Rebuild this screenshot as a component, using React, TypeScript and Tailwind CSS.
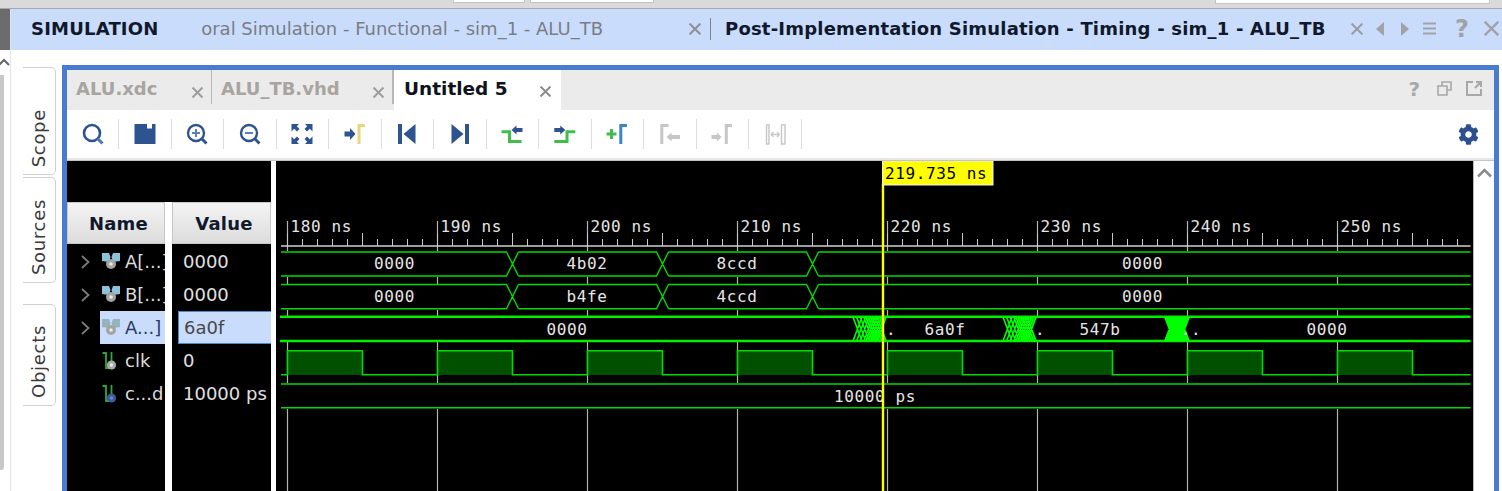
import { FaCog } from 'react-icons/fa';

const NAVY = '#2d5490';
const GREEN = '#3fbf4a';
const OFF = '#c6c6c6';
const WAVE = '#00dc00';

function CloseX({ size = 11, color = '#9c9c9c', width = 2 }: { size?: number; color?: string; width?: number }) {
  return (
    <svg width={size} height={size} viewBox="0 0 10 10" className="shrink-0">
      <path d="M0.5 0.5 L9.5 9.5 M9.5 0.5 L0.5 9.5" stroke={color} strokeWidth={width * 10 / size} fill="none" />
    </svg>
  );
}

const TOOL_ICONS = [
  <>
    <circle cx="11" cy="11" r="8" fill="none" stroke={NAVY} strokeWidth="2.6" />
    <path d="M16.5 16.5 L21.5 21.5" stroke="#4a78b8" strokeWidth="3" />
  </>,
  <path d="M1.5 2 H14 V6.5 H19 V2 H22.5 V22 H1.5 Z" fill={NAVY} />,
  <>
    <circle cx="11" cy="11" r="8" fill="none" stroke={NAVY} strokeWidth="2.4" />
    <path d="M7 11 H15 M11 7 V15" stroke="#5a82b8" strokeWidth="2" />
    <path d="M16.5 16.5 L21.5 21.5" stroke={NAVY} strokeWidth="3" />
  </>,
  <>
    <circle cx="11" cy="11" r="8" fill="none" stroke={NAVY} strokeWidth="2.4" />
    <path d="M7 11 H15" stroke="#5a82b8" strokeWidth="2" />
    <path d="M16.5 16.5 L21.5 21.5" stroke={NAVY} strokeWidth="3" />
  </>,
  <g fill={NAVY}>
    <path d="M1.5 2 H9 L6.8 4.2 L9.5 7 L7 9.5 L4.2 6.8 L1.5 9.5 Z" />
    <path d="M22.5 2 H15 L17.2 4.2 L14.5 7 L17 9.5 L19.8 6.8 L22.5 9.5 Z" />
    <path d="M1.5 22 H9 L6.8 19.8 L9.5 17 L7 14.5 L4.2 17.2 L1.5 14.5 Z" />
    <path d="M22.5 22 H15 L17.2 19.8 L14.5 17 L17 14.5 L19.8 17.2 L22.5 14.5 Z" />
  </g>,
  <>
    <path d="M1.5 9.5 H7 V6 L12.5 12 L7 18 V14.5 H1.5 Z" fill={NAVY} />
    <path d="M16 22 V3.5 H22" fill="none" stroke="#e8d57c" strokeWidth="3" />
  </>,
  <>
    <path d="M3 2 H7 V22 H3 Z" fill={NAVY} />
    <path d="M8.5 12 L20.5 2 V22 Z" fill={NAVY} />
  </>,
  <>
    <path d="M3.5 2 L15.5 12 L3.5 22 Z" fill={NAVY} />
    <path d="M17 2 H21 V22 H17 Z" fill={NAVY} />
  </>,
  <>
    <path d="M1.5 9.7 H9.5 V19.5 H21.5" fill="none" stroke={GREEN} strokeWidth="3" />
    <path d="M11.5 8 L16.5 3.5 V6 H22.5 V10 H16.5 V12.5 Z" fill={NAVY} />
  </>,
  <>
    <path d="M1.3 19.5 H14 V9.7 H22.3" fill="none" stroke={GREEN} strokeWidth="3" />
    <path d="M12.3 8 L7.3 3.5 V6 H1.3 V10 H7.3 V12.5 Z" fill={NAVY} />
  </>,
  <>
    <path d="M1.5 12 H11.5 M6.5 7 V17" stroke={GREEN} strokeWidth="3" />
    <path d="M15.8 22 V3.5 H22" fill="none" stroke="#3a86c2" strokeWidth="3" />
  </>,
  <>
    <path d="M3.8 22 V3.5 H10.5" fill="none" stroke={OFF} strokeWidth="3" />
    <path d="M8.5 15 L13.5 10.5 V13 H22 V17 H13.5 V19.5 Z" fill={OFF} />
  </>,
  <>
    <path d="M1.5 13 H7 V10.5 L11.5 15 L7 19.5 V17 H1.5 Z" fill={OFF} />
    <path d="M16.3 22 V3.5 H22" fill="none" stroke={OFF} strokeWidth="3" />
  </>,
  <>
    <path d="M3.5 3 H6 V22 H3.5 Z M18.5 3 H22 V22 H18.5 Z" fill="none" stroke={OFF} strokeWidth="1.4" />
    <path d="M8 12.5 H16.5 M8 12.5 L10.5 10 M8 12.5 L10.5 15 M16.5 12.5 L14 10 M16.5 12.5 L14 15" fill="none" stroke={OFF} strokeWidth="1.4" />
  </>,
];

function BusIcon({ dim }: { dim?: boolean }) {
  return (
    <svg width="20" height="20" viewBox="0 0 20 20" className="shrink-0">
      <path d="M1 1 H8 L9.5 5 L8 10 L1 9 Z M19 1 H12 L10.5 5 L12 10 L19 9 Z" fill={dim ? '#94b4c2' : '#8fc2da'} />
      <circle cx="10" cy="12" r="5" fill="#a4a4a4" />
      <circle cx="10" cy="12" r="1.8" fill="#e8e8e8" />
    </svg>
  );
}

function BitIcon({ blue }: { blue?: boolean }) {
  return (
    <svg width="20" height="20" viewBox="0 0 20 20" className="shrink-0">
      <path d="M1.5 2 H5 V17 H8 M10.5 1 V10" fill="none" stroke="#2fa83a" strokeWidth="1.8" />
      <circle cx="10.5" cy="14" r="4.6" fill={blue ? '#3d5a9c' : '#a8a8a8'} />
      <circle cx="10.5" cy="14" r="1.7" fill={blue ? '#6d88c8' : '#e8e8e8'} />
    </svg>
  );
}

const SIGNALS = [
  { name: 'A[...]', value: '0000', bus: true },
  { name: 'B[...]', value: '0000', bus: true },
  { name: 'A...]', value: '6a0f', bus: true, selected: true },
  { name: 'clk', value: '0' },
  { name: 'c...d', value: '10000 ps', blue: true },
];

const GRID = [0, 1, 2, 3, 4, 5, 6, 7].map((i) => 287.5 + i * 150);
const TICKS = Array.from({ length: 80 }, (_, i) => 287.5 + i * 15).filter((x) => x < 1468);

function busPath(y1: number, y2: number, edges: number[], half = 6) {
  let d = '';
  let from = 281;
  for (const t of edges) {
    d += `M${from} ${y1} H${t - half} L${t + half} ${y2} M${from} ${y2} H${t - half} L${t + half} ${y1} `;
    from = t + half;
  }
  d += `M${from} ${y1} H1470.5 M${from} ${y2} H1470.5`;
  return d;
}

function clockPath() {
  let d = 'M281 374.7 H287.5';
  for (const x of GRID) {
    const end = Math.min(x + 150, 1470.5);
    d += ` V350.7 H${x + 75} V374.7 H${end}`;
  }
  return d;
}

function hatch(from: number, to: number, step: number) {
  let d = '';
  for (let x = from; x <= to; x += step) {
    d += `M${x} 341 L${x + 9} 317 M${x} 317 L${x + 9} 341 `;
  }
  return d;
}

function WaveText({ x, y, children, anchor = 'middle' }: { x: number; y: number; children: string; anchor?: 'middle' | 'start' }) {
  return (
    <text x={x} y={y} textAnchor={anchor} fill="#e6e6e6" fontSize="16" letterSpacing="0.6">
      {children}
    </text>
  );
}

function Waveform() {
  return (
    <svg width="1197" height="330" viewBox="276 161 1197 330" className="block font-['DejaVu_Sans_Mono',monospace]">
      {GRID.map((x) => (
        <path key={x} d={`M${x} 221 V491`} stroke="#b4b4b4" strokeWidth="1.2" />
      ))}
      {TICKS.map((x, i) => (
        <path key={x} d={`M${x} ${i % 5 === 0 ? 233 : 239} V246`} stroke="#c8c8c8" strokeWidth="1" />
      ))}
      <path d="M281 246 H1470.5" stroke="#d0d0d0" strokeWidth="1.5" />
      {GRID.map((x, i) => (
        <WaveText key={x} x={x + 3} y={231.5} anchor="start">{`${180 + i * 10} ns`}</WaveText>
      ))}

      <rect x="281" y="251" width="1190" height="26" fill="#000" />
      <rect x="281" y="284" width="1190" height="26" fill="#000" />
      <rect x="281" y="316" width="1190" height="26" fill="#000" />
      <rect x="281" y="383" width="1190" height="26" fill="#000" />

      <path d={busPath(252, 276, [512.5, 662.5, 812.5])} stroke={WAVE} strokeWidth="1.4" fill="none" />
      <path d={busPath(284.5, 308.7, [512.5, 662.5, 812.5])} stroke={WAVE} strokeWidth="1.4" fill="none" />
      <path d="M280 316.8 H1470.5 M280 341 H1470.5" stroke="#00f000" strokeWidth="2.6" fill="none" />
      <path d={hatch(853, 866, 3.6)} stroke="#00ff00" strokeWidth="1.6" fill="none" />
      <path d={hatch(866, 879, 2.2)} stroke="#00ff00" strokeWidth="1.9" fill="none" />
      <path d={hatch(1003, 1016, 3.6)} stroke="#00ff00" strokeWidth="1.6" fill="none" />
      <path d={hatch(1016, 1029, 2.2)} stroke="#00ff00" strokeWidth="1.9" fill="none" />
      <path d={hatch(1165, 1180, 1.5)} stroke="#00ff00" strokeWidth="2" fill="none" />

      {GRID.map((x) => (
        <rect key={x} x={x} y="351" width="75" height="24" fill="#005000" />
      ))}
      <path d={clockPath()} stroke={WAVE} strokeWidth="1.6" fill="none" />
      <path d="M281 384 H1470.5 M281 407.7 H1470.5" stroke={WAVE} strokeWidth="1.4" fill="none" />

      <WaveText x={394.5} y={268.5}>0000</WaveText>
      <WaveText x={587} y={268.5}>4b02</WaveText>
      <WaveText x={737} y={268.5}>8ccd</WaveText>
      <WaveText x={1142.5} y={268.5}>0000</WaveText>
      <WaveText x={394.5} y={301.5}>0000</WaveText>
      <WaveText x={587} y={301.5}>b4fe</WaveText>
      <WaveText x={737} y={301.5}>4ccd</WaveText>
      <WaveText x={1142.5} y={301.5}>0000</WaveText>
      <WaveText x={567} y={335}>0000</WaveText>
      <WaveText x={891} y={335}>.</WaveText>
      <WaveText x={945} y={335}>6a0f</WaveText>
      <WaveText x={1040} y={335}>.</WaveText>
      <WaveText x={1100} y={335}>547b</WaveText>
      <WaveText x={1191} y={335}>..</WaveText>
      <WaveText x={1327} y={335}>0000</WaveText>
      <WaveText x={875} y={401.5}>10000 ps</WaveText>

      <path d="M883 184 V491" stroke="#ffff00" strokeWidth="2.4" />
      <rect x="882.5" y="161" width="110.5" height="24" fill="#ffff00" stroke="#f0f0f0" strokeWidth="1" />
      <text x="885" y="179" fill="#000" fontSize="16" letterSpacing="0.6">
        219.735 ns
      </text>
    </svg>
  );
}

function SideTab({ label, className }: { label: string; className: string }) {
  return (
    <div className={`flex w-[33px] items-end justify-center rounded-r-[5px] border border-l-0 border-[#d0d0d0] bg-white pb-[7px] ${className}`}>
      <span className="rotate-180 text-[18px] leading-none tracking-[0.7px] text-[#3a3a3a] [writing-mode:vertical-rl]">{label}</span>
    </div>
  );
}

export default function App() {
  return (
    <div className="flex h-[491px] w-[1502px] flex-col overflow-hidden bg-white font-['DejaVu_Sans',sans-serif]">
      <div className="flex h-[9px] shrink-0 items-start border-b border-[#a9a9a9] bg-[#dadada]">
        <div className="ml-[453px] h-[3px] w-[72px] border border-t-0 border-[#c4c4c4] bg-white" />
        <div className="ml-[5px] h-[3px] w-[124px] border border-t-0 border-[#c4c4c4] bg-white" />
        <div className="ml-[561px] h-[4px] w-[275px] border border-t-0 border-[#c4c4c4] bg-white" />
      </div>

      <div className="flex h-[41px] shrink-0">
        <div className="w-[10px] bg-[#6c6c6c]" />
        <div className="w-px bg-[#e4e4e4]" />
        <div className="flex flex-1 items-center bg-[#c9dcfc] pb-[2px] text-[18px] leading-[24px]">
          <span className="ml-[20px] w-[170px] shrink-0 font-bold tracking-[0.2px] text-[#10182c]">SIMULATION</span>
          <div className="flex w-[402px] shrink-0 justify-end overflow-hidden whitespace-nowrap text-[#7a7d84]">
            <span className="shrink-0">oral Simulation - Functional - sim_1 - ALU_TB</span>
          </div>
          <div className="ml-[86px] shrink-0">
            <CloseX size={12} color="#8e9096" />
          </div>
          <div className="ml-[9px] h-[22px] w-px shrink-0 bg-[#7d8088]" />
          <span className="ml-[14px] w-[600px] shrink-0 whitespace-nowrap font-bold tracking-[0.2px] text-[#10182c]">
            Post-Implementation Simulation - Timing - sim_1 - ALU_TB
          </span>
          <div className="ml-[26px] shrink-0">
            <CloseX size={12} color="#9a9ca2" />
          </div>
          <svg width="9" height="14" viewBox="0 0 9 14" className="ml-[13px] shrink-0">
            <path d="M8 0 V14 L0 7 Z" fill="#a0a2a8" />
          </svg>
          <svg width="9" height="14" viewBox="0 0 9 14" className="ml-[15px] shrink-0">
            <path d="M1 0 V14 L9 7 Z" fill="#a0a2a8" />
          </svg>
          <svg width="13" height="13" viewBox="0 0 13 13" className="ml-[14px] shrink-0">
            <path d="M0 1.5 H13 M0 6.5 H13 M0 11.5 H13" stroke="#a0a2a8" strokeWidth="2" />
          </svg>
          <span className="ml-[19px] shrink-0 text-[24px] font-bold text-[#a0a2a8]">?</span>
          <div className="ml-[15px] shrink-0">
            <CloseX size={15} color="#a0a2a8" width={2.4} />
          </div>
        </div>
      </div>

      <div className="flex min-h-0 flex-1">
        <div className="flex w-[11px] shrink-0 flex-col border-r border-[#e4e4e4]">
          <svg width="10" height="25" viewBox="0 0 10 25" className="shrink-0">
            <path d="M-1 15 L4 10 L9 15" fill="none" stroke="#666" strokeWidth="2" />
          </svg>
          <div className="h-[395px] w-[4px] rounded-br-[3px] bg-[#c8c8c8]" />
        </div>

        <div className="flex w-[51px] shrink-0 flex-col pt-[17px] pl-[12px]">
          <SideTab label="Scope" className="h-[108px]" />
          <SideTab label="Sources" className="mt-[2px] h-[106px]" />
          <SideTab label="Objects" className="mt-[21px] h-[102px]" />
        </div>

        <div className="mt-[15px] mr-[3px] flex min-w-0 flex-1 flex-col border-x-[5px] border-t-[5px] border-[#4a7ccd]">
          <div className="flex h-[40px] shrink-0 bg-[#ebebeb]">
            <div className="flex h-[34px] w-[145px] items-center border-r border-[#b8b8b8] pt-[2px] pr-[8px] pl-[9px]">
              <span className="flex-1 text-[18px] font-bold text-[#a9a49f]">ALU.xdc</span>
              <div className="mt-[8px]">
                <CloseX />
              </div>
            </div>
            <div className="flex h-[34px] w-[182px] items-center border-r-2 border-[#b8b8b8] pt-[2px] pr-[8px] pl-[9px]">
              <span className="flex-1 text-[18px] font-bold text-[#a9a49f]">ALU_TB.vhd</span>
              <div className="mt-[8px]">
                <CloseX />
              </div>
            </div>
            <div className="flex w-[167px] items-center bg-white pr-[10px] pl-[10px]">
              <span className="-mt-[3px] flex-1 text-[18.5px] font-bold text-[#10131c]">Untitled 5</span>
              <div className="mt-[2px]">
                <CloseX color="#8c8c8c" />
              </div>
            </div>
            <div className="flex flex-1 items-center justify-end gap-[14px] pr-[12px] pb-[3px]">
              <span className="text-[20px] font-bold text-[#a8a8a8]">?</span>
              <svg width="15" height="15" viewBox="0 0 15 15" className="ml-[3px]">
                <path d="M5 5 V1 H14 V9 H10 M1 5 H10 V14 H1 Z" fill="none" stroke="#a8a8a8" strokeWidth="1.6" />
              </svg>
              <svg width="16" height="15" viewBox="0 0 16 15">
                <path d="M7 1 H1 V14 H15 V8 M9 7 L15 1 M10 1 H15 V6" fill="none" stroke="#a8a8a8" strokeWidth="2" />
              </svg>
            </div>
          </div>

          <div className="flex h-[50px] shrink-0 items-center border-b-2 border-[#e8e8e8] bg-white">
            {TOOL_ICONS.map((icon, i) => (
              <div
                key={i}
                className={`flex h-[30px] items-center justify-center border-r border-[#dcdcdc] ${i === 0 ? 'w-[52px]' : 'w-[52.5px]'}`}
              >
                <svg width="24" height="24" viewBox="0 0 24 24">
                  {icon}
                </svg>
              </div>
            ))}
            <div className="flex flex-1 justify-end pr-[15px]">
              <FaCog size={21} color="#2d4f8c" />
            </div>
          </div>

          <div className="flex min-h-0 flex-1 border-t border-[#c4c4c4]">
            <div className="flex w-[204px] shrink-0 flex-col bg-black">
              <div className="h-[41px] shrink-0" />
              <div className="flex min-h-0 flex-1">
                <div className="w-[98px] shrink-0 overflow-hidden">
                  <div className="flex h-[42px] items-center justify-center border border-[#c8c8c8] bg-gradient-to-b from-[#f4f4f4] to-[#dcdcdc] pl-[5px] text-[18px] font-bold tracking-[0.2px] text-[#10182c]">
                    Name
                  </div>
                  <div className="pt-[1px]">
                    {SIGNALS.map((s) => (
                      <div key={s.name} className="flex h-[33px] items-center">
                        <div className="flex w-[33px] shrink-0 justify-center pl-[3px]">
                          {s.bus && (
                            <svg width="9" height="14" viewBox="0 0 9 14">
                              <path d="M1 1 L7.5 7 L1 13" fill="none" stroke="#7c7c7c" strokeWidth="1.8" />
                            </svg>
                          )}
                        </div>
                        <div
                          className={`flex h-[33px] flex-1 items-center gap-[4px] whitespace-nowrap pl-[1px] text-[18px] ${
                            s.selected ? 'bg-[#c9dcfc] text-[#2a3a66]' : 'text-[#dcdcdc]'
                          }`}
                        >
                          {s.bus ? <BusIcon dim={s.selected} /> : <BitIcon blue={s.blue} />}
                          {s.name}
                        </div>
                      </div>
                    ))}
                  </div>
                </div>
                <div className="w-[7px] shrink-0 bg-white" />
                <div className="w-[99px] shrink-0 overflow-hidden">
                  <div className="flex h-[42px] items-center justify-center border border-[#c8c8c8] bg-gradient-to-b from-[#f4f4f4] to-[#dcdcdc] pl-[5px] text-[18px] font-bold tracking-[0.2px] text-[#10182c]">
                    Value
                  </div>
                  <div className="pt-[1px] pl-[6px] text-[18px] whitespace-nowrap text-[#e0e0e0]">
                    {SIGNALS.map((s) => (
                      <div
                        key={s.name}
                        className={`flex h-[33px] items-center pl-[5px] ${
                          s.selected ? 'border border-r-0 border-[#4a8ac8] bg-[#c9dcfc] pl-[4px] text-[#484848]' : ''
                        }`}
                      >
                        {s.value}
                      </div>
                    ))}
                  </div>
                </div>
              </div>
            </div>

            <div className="w-[5px] shrink-0 bg-white" />
            <div className="min-w-0 flex-1 overflow-hidden bg-black">
              <Waveform />
            </div>
            <div className="flex w-[21px] shrink-0 justify-center border-l border-[#b8b8b8] bg-white pt-[7px]">
              <svg width="15" height="10" viewBox="0 0 15 10">
                <path d="M1 8.5 L7.5 2 L14 8.5" fill="none" stroke="#8c8c8c" strokeWidth="2.6" />
              </svg>
            </div>
          </div>
        </div>
      </div>
    </div>
  );
}
